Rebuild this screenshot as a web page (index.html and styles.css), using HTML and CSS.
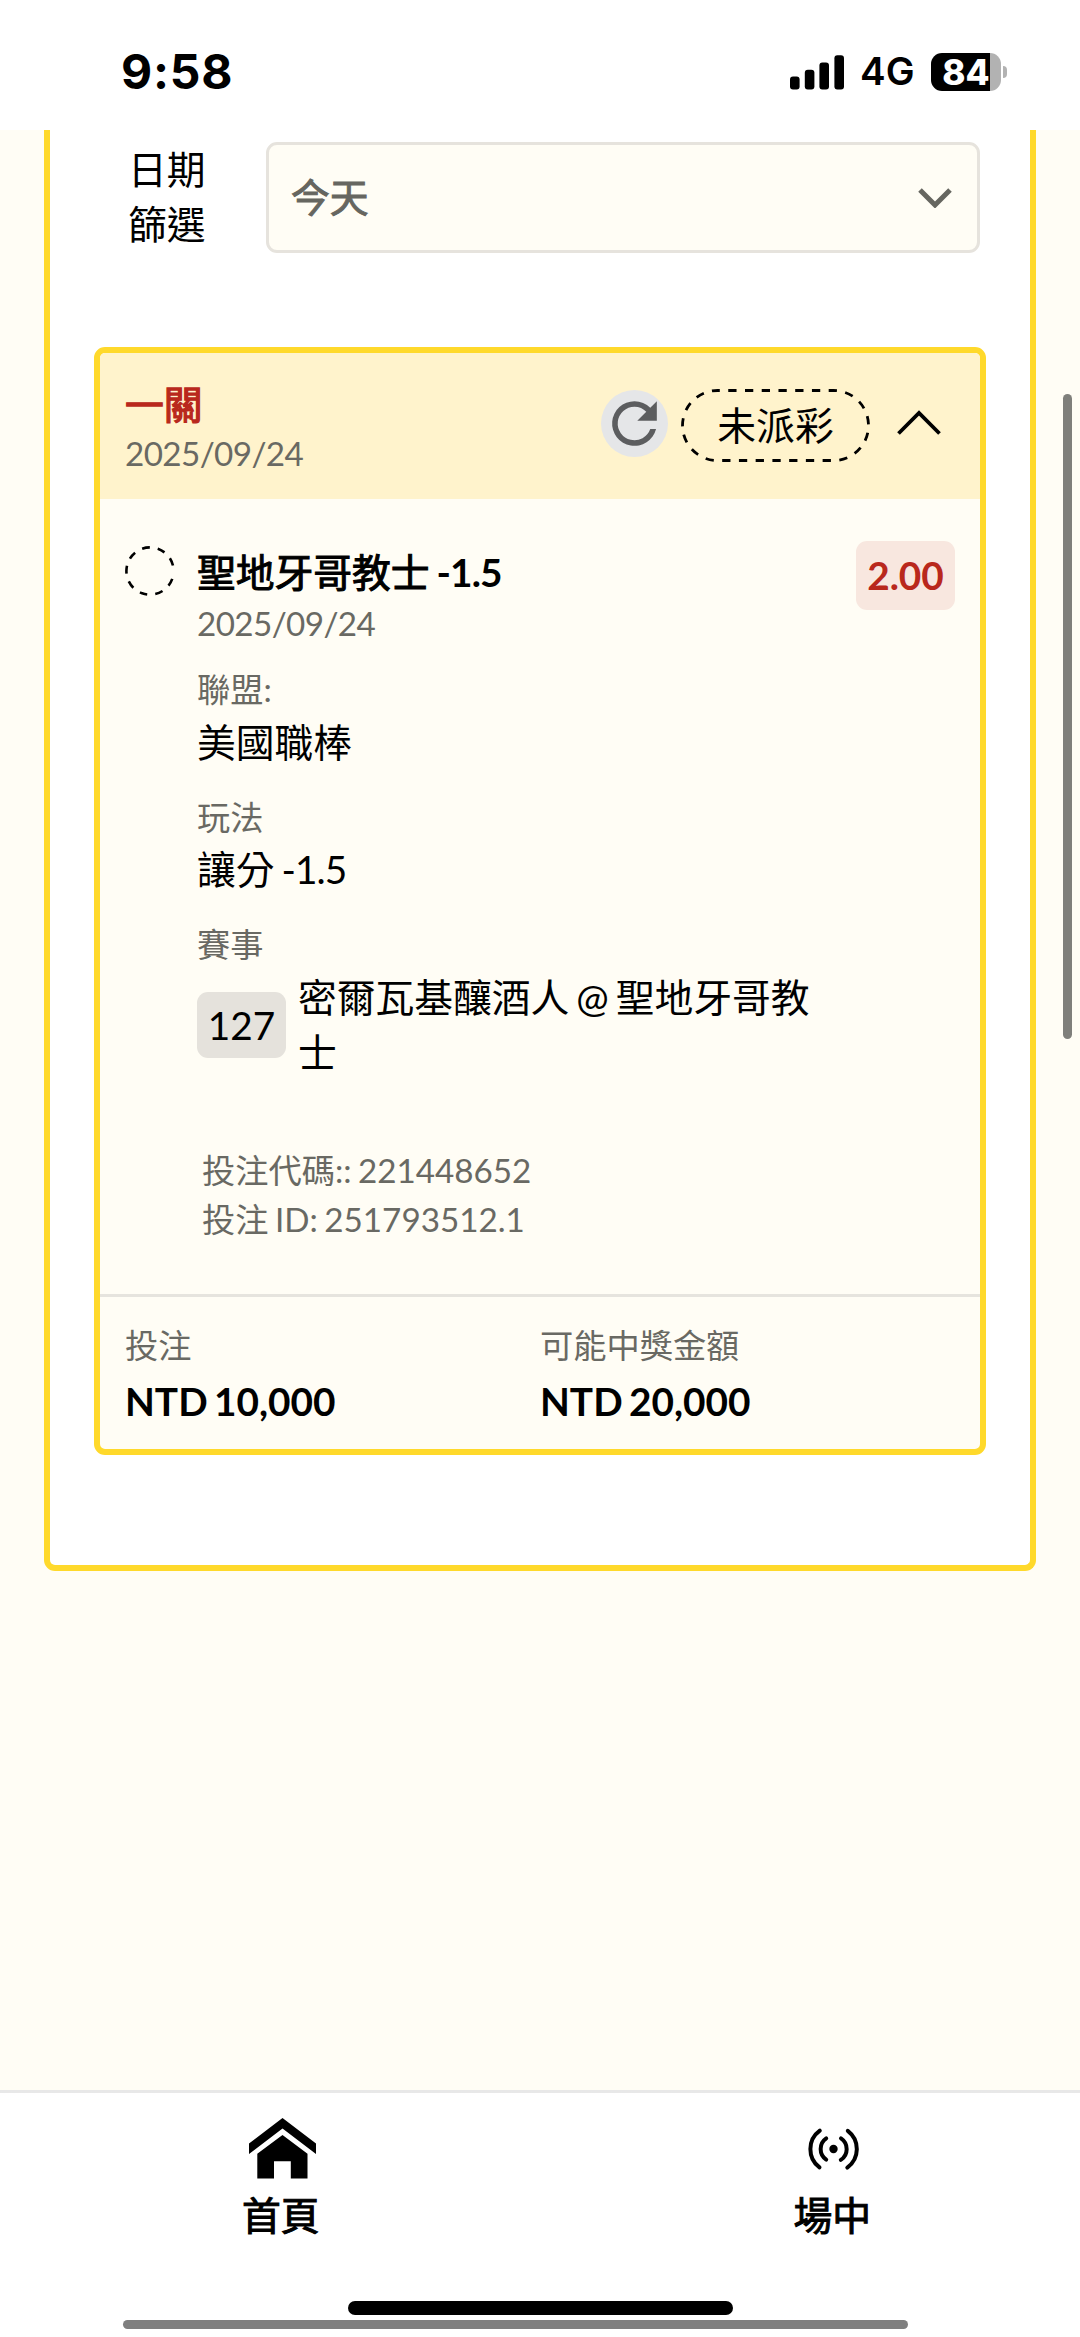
FILE: index.html
```html
<!DOCTYPE html>
<html lang="zh-Hant">
<head>
  <meta charset="UTF-8" />
  <meta name="viewport" content="width=device-width, initial-scale=1.0" />
  <title>投注紀錄</title>
  <link rel="stylesheet" href="styles.css">
</head>
<body>
  <header class="status-bar">
    <span class="status-time">9:58</span>
    <div class="status-right">
      <svg class="signal" width="54" height="35" viewBox="0 0 54 35">
        <rect x="0" y="21.5" width="9.6" height="13" rx="3" />
        <rect x="14.8" y="14.8" width="9.6" height="19.7" rx="3" />
        <rect x="29.4" y="7.5" width="9.6" height="27" rx="3" />
        <rect x="44.4" y="0.2" width="9.6" height="34.3" rx="3" />
      </svg>
      <span class="network">4G</span>
      <div class="battery"><span>84</span></div>
      <div class="battery-tip"></div>
    </div>
  </header>

  <main class="page">
    <section class="panel">
      <div class="filter">
        <label class="filter-label">日期<br>篩選</label>
        <div class="select">
          <span class="medium">今天</span>
          <svg width="34" height="20" viewBox="0 0 34 20">
            <path d="M2 2L17 17L32 2" fill="none" stroke="#666660" stroke-width="5" />
          </svg>
        </div>
      </div>

      <article class="bet-card">
        <div class="bet-header">
          <div class="bet-heading">
            <div class="bet-type medium">一關</div>
            <div class="date">2025/09/24</div>
          </div>
          <div class="refresh">
            <svg width="67" height="67" viewBox="0 0 24 24">
              <path d="M17.65 6.35A7.96 7.96 0 0 0 12 4a8 8 0 1 0 7.73 10h-2.08A6 6 0 1 1 12 6c1.66 0 3.14.69 4.22 1.78L13 11h7V4z" fill="#5c5d5f" />
            </svg>
          </div>
          <div class="pill">
            <svg width="189" height="73" viewBox="0 0 189 73">
              <rect x="1.5" y="1.5" width="186" height="70" rx="35" fill="none" stroke="#000" stroke-width="2.8" stroke-dasharray="8.3 8.44" stroke-dashoffset="6" />
            </svg>
            <span>未派彩</span>
          </div>
          <svg class="toggle" width="44" height="26" viewBox="0 0 44 26">
            <path d="M1.5 23.5L22 3L42.5 23.5" fill="none" stroke="#000" stroke-width="3.8" />
          </svg>
        </div>

        <div class="bet-body">
          <svg class="state" width="50" height="50" viewBox="0 0 50 50">
            <circle cx="25" cy="25" r="23.6" pathLength="360" transform="rotate(19.5 25 25)" fill="none" stroke="#000" stroke-width="2.6"
              stroke-dasharray="19 19.5 19 19.5 19 19.5 19 19.5 19 19.5 19 19.5 19 19.5 19 19.5 19 33" />
          </svg>
          <div class="bet-detail">
            <div class="bet-title">
              <div>
                <div class="team"><span class="medium">聖地牙哥教士</span> <b class="line">-1.5</b></div>
                <div class="date">2025/09/24</div>
              </div>
              <div class="odds">2.00</div>
            </div>
            <div class="field">
              <div class="label">聯盟:</div>
              <div class="value">美國職棒</div>
            </div>
            <div class="field">
              <div class="label">玩法</div>
              <div class="value">讓分 <span class="line">-1.5</span></div>
            </div>
            <div class="field">
              <div class="label">賽事</div>
              <div class="match">
                <span class="match-no">127</span>
                <span class="match-name">密爾瓦基釀酒人 @ 聖地牙哥教士</span>
              </div>
            </div>
            <div class="codes">
              <div>投注代碼:: 221448652</div>
              <div>投注 ID: 251793512.1</div>
            </div>
          </div>
        </div>

        <div class="bet-footer">
          <div>
            <div class="label">投注</div>
            <div class="amount">NTD 10,000</div>
          </div>
          <div>
            <div class="label">可能中獎金額</div>
            <div class="amount">NTD 20,000</div>
          </div>
        </div>
      </article>
    </section>
    <div class="scroll-thumb"></div>
  </main>

  <nav class="tab-bar">
    <a class="tab tab-home">
      <svg width="67" height="61" viewBox="0 0 67 61">
        <path d="M33.5 0L67 25.5V36L33.5 10.5L0 36V25.5z" />
        <path d="M33.5 17L58.5 35.7V60.5H41.8V43.2H25V60.5H8.3V35.7z" />
      </svg>
      <span class="medium">首頁</span>
    </a>
    <a class="tab tab-live">
      <svg width="67" height="61" viewBox="-33.5 -31 67 61">
        <circle r="4.2" />
        <g fill="none" stroke="#000" stroke-width="4" stroke-linecap="round">
          <path d="M-7.3 -10.6A12.9 12.9 0 0 0 -7.3 10.6" />
          <path d="M7.5 -10.6A12.9 12.9 0 0 1 7.3 10.9" />
          <path d="M-13.7 -18.4A22.9 22.9 0 0 0 -14 18.4" />
          <path d="M14.3 -18.2A22.9 22.9 0 0 1 13.8 18.6" />
        </g>
      </svg>
      <span class="medium">場中</span>
    </a>
    <div class="home-indicator"></div>
    <div class="scroll-thumb-x"></div>
  </nav>
</body>
</html>
```
FILE: styles.css
```css
* {
  box-sizing: border-box;
}
body {
  margin: 0;
  height: 2337px;
  display: flex;
  flex-direction: column;
  overflow: hidden;
  background: #fffdf5;
  color: #000;
  font-family: Lato, "Noto Sans CJK TC", sans-serif;
  font-size: 38.77px;
  line-height: 55.4px;
  word-spacing: -3px;
}
svg {
  display: block;
  flex: none;
}
/* the CJK font has no medium weight, so thicken the regular one */
.medium {
  -webkit-text-stroke: 1px currentColor;
}

/* Status bar */
.status-bar {
  height: 130px;
  padding: 14px 73px 0 121px;
  display: flex;
  justify-content: space-between;
  align-items: center;
  background: #fff;
  font-family: Inter, sans-serif;
}
.status-time {
  font-size: 48px;
  font-weight: 700;
  letter-spacing: 0.8px;
}
.status-right {
  display: flex;
  align-items: center;
}
.network {
  width: 70px;
  padding-left: 16px;
  margin-right: 17px;
  font-size: 38.5px;
  font-weight: 600;
}
.battery {
  width: 70px;
  height: 38px;
  border-radius: 11px;
  background: linear-gradient(to right, #000 59px, #b2b2b2 59px);
  color: #fff;
  font-size: 35px;
  font-weight: 800;
  line-height: 38px;
  text-align: center;
}
.battery-tip {
  width: 4px;
  height: 12px;
  margin-left: 2px;
  border-radius: 0 4px 4px 0;
  background: #b2b2b2;
}

/* Main panel */
.page {
  position: relative;
  height: 1960px;
}
.panel {
  height: 1441px;
  margin: 0 44px;
  padding: 12px 44px 0;
  border: 6px solid #ffd92b;
  border-top: 0;
  border-radius: 0 0 11px 11px;
  background: #fff;
}
.filter {
  display: flex;
  margin-bottom: 94px;
  padding: 0 6px 0 34px;
}
.filter-label {
  width: 138px;
}
.select {
  flex: 1;
  height: 111px;
  padding: 0 25px 0 22px;
  display: flex;
  justify-content: space-between;
  align-items: center;
  border: 3px solid #e6e3dd;
  border-radius: 11px;
  background: #fffdf5;
  color: #666660;
}

/* Bet card */
.bet-card {
  width: 892px;
  border: 6px solid #ffd92b;
  border-radius: 11px;
  background: #fffdf5;
  overflow: hidden;
}
.bet-header {
  height: 146px;
  padding: 0 39px 6px 25px;
  display: flex;
  align-items: center;
  background: #fff3cc;
}
.bet-heading {
  flex: 1;
  padding-top: 11px;
}
.bet-type {
  color: #b9281c;
  line-height: 50px;
  -webkit-text-stroke-width: 1.3px;
}
.date,
.label,
.codes {
  color: #696963;
  font-size: 33.23px;
  line-height: 49.85px;
}
.date {
  letter-spacing: -0.6px;
}
.refresh {
  width: 67px;
  height: 67px;
  border-radius: 50%;
  background: #e5e6e8;
}
.pill {
  position: relative;
  width: 189px;
  height: 73px;
  margin: 4px 27px 0 13px;
  line-height: 73px;
  text-align: center;
}
.pill svg {
  position: absolute;
  top: 0;
  left: 0;
}
.bet-body {
  height: 795px;
  padding: 42px 25px 0;
  display: flex;
}
.state {
  margin: 5px 22px 0 0;
}
.bet-detail {
  flex: 1;
}
.bet-title {
  display: flex;
  justify-content: space-between;
  padding-top: 5px;
  margin-bottom: 17px;
}
.team {
  line-height: 52.5px;
}
.line {
  letter-spacing: -0.9px;
}
.odds {
  width: 99px;
  height: 69px;
  margin-top: -5px;
  border-radius: 11px;
  background: #f8e7df;
  color: #b9281c;
  font-weight: 700;
  line-height: 69px;
  text-align: center;
}
.field {
  margin-bottom: 22px;
}
.match {
  display: flex;
  align-items: center;
  gap: 12px;
}
.match-no {
  width: 89px;
  height: 66px;
  border-radius: 11px;
  background: #e5e2dc;
  line-height: 66px;
  text-align: center;
}
.match-name {
  width: 520px;
}
.codes {
  padding: 43px 0 0 5px;
  word-spacing: -2px;
}
.bet-footer {
  height: 155px;
  padding: 24px 25px 0;
  display: grid;
  grid-template-columns: 1fr 1fr;
  border-top: 3px solid #e6e4de;
}
.amount {
  margin-top: 3px;
  font-weight: 700;
}
.scroll-thumb {
  position: absolute;
  top: 264px;
  right: 8px;
  width: 9px;
  height: 645px;
  border-radius: 5px;
  background: #7f7f7b;
}

/* Bottom tabs */
.tab-bar {
  position: relative;
  height: 247px;
  padding-top: 25px;
  display: flex;
  justify-content: space-between;
  border-top: 3px solid #e8e8e8;
  background: #fff;
}
.tab {
  display: flex;
  flex-direction: column;
  align-items: center;
  gap: 9px;
}
.tab span {
  margin-right: 3px;
}
.tab-home {
  margin-left: 242px;
}
.tab-live {
  margin-right: 206px;
}
.home-indicator {
  position: absolute;
  top: 208px;
  left: 348px;
  width: 385px;
  height: 14px;
  border-radius: 7px;
  background: #000;
}
.scroll-thumb-x {
  position: absolute;
  top: 227px;
  left: 123px;
  width: 785px;
  height: 9px;
  border-radius: 5px;
  background: #7f7f7f;
}
```
